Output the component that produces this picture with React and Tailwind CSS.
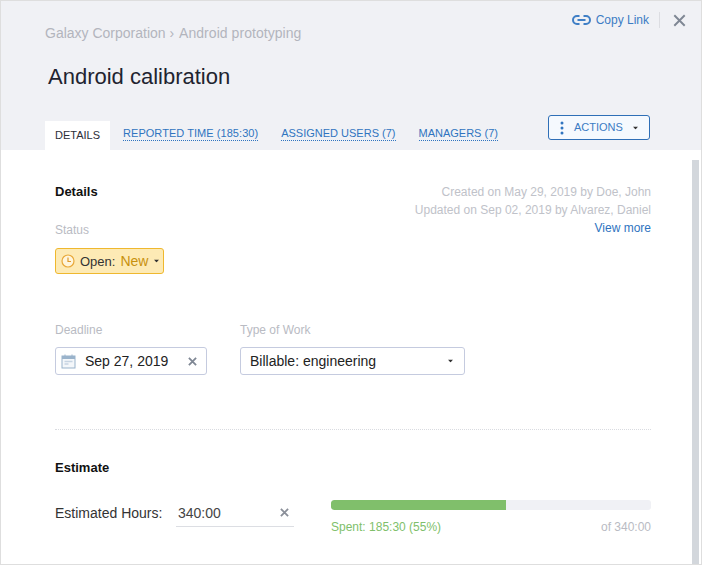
import React from "react";

const Caret = ({ className = "" }) => (
  <svg width="7" height="4" viewBox="0 0 7 4" className={className}><path d="M0 0h7L3.5 4z" fill="currentColor" /></svg>
);

const Cross = ({ size = 9, color = "#7f8794", sw = 2 }) => (
  <svg width={size} height={size} viewBox="0 0 10 10"><path d="M1 1l8 8M9 1l-8 8" stroke={color} strokeWidth={sw} fill="none" /></svg>
);

const Tab = ({ children, className = "" }) => (
  <span className={`text-[11px] leading-[13px] text-[#2f74c0] border-b border-dotted border-[#2f74c0] ${className}`}>{children}</span>
);

export default function App() {
  return (
    <div className="w-[702px] h-[565px] flex flex-col overflow-hidden bg-white border border-[#dedede] text-[#222] font-['Liberation_Sans',Arial,sans-serif]">
      <header className="h-[149px] shrink-0 bg-[#f0f1f5] flex flex-col">
        <div className="flex justify-between items-start">
          <div className="pl-[44px] pt-[24px] text-[14px] leading-[16px] text-[#b3b5bd]">Galaxy Corporation › <span className="ml-[1px] tracking-[0.05px]">Android prototyping</span></div>
          <div className="flex items-center pt-[11px] pr-[15px]">
            <svg width="19" height="10" viewBox="0 0 19 10" className="mr-[5px]">
              <path d="M7.5 1H5a4 4 0 0 0 0 8h2.500M11.500 1H14a4 4 0 0 1 0 8h-2.500M5.500 5h8" stroke="#3f7fc6" strokeWidth="2" fill="none" />
            </svg>
            <span className="text-[12px] leading-[14px] text-[#3c7cc4]">Copy Link</span>
            <span className="w-px h-[16px] bg-[#dcdde2] ml-[10px] mr-[13px]"></span>
            <Cross size={13} color="#7f8794" sw={1.500} />
          </div>
        </div>
        <h1 className="pl-[47px] mt-[23px] text-[22px] leading-[26px] font-normal text-[#1f2430]">Android calibration</h1>
        <div className="mt-auto flex items-end pl-[44px] pr-[51px]">
          <div className="w-[65px] h-[29px] bg-white flex items-center justify-center text-[11px] text-[#2b2f38]">DETAILS</div>
          <div className="flex items-center gap-[23px] ml-[13px] h-[29px] pb-[4px]">
            <Tab className="tracking-[0.05px]">REPORTED TIME (185:30)</Tab>
            <Tab>ASSIGNED USERS (7)</Tab>
            <Tab>MANAGERS (7)</Tab>
          </div>
          <button className="ml-auto mb-[10px] w-[102px] h-[25px] rounded-[3px] border border-[#2f6fb7] bg-[#f5f9fe] flex items-center pl-[11px] text-[#3c7cc4]">
            <svg width="4" height="14" viewBox="0 0 4 14" className="mr-[10px]">
              <circle cx="2" cy="2" r="1.500" fill="#2f74c0" /><circle cx="2" cy="7" r="1.500" fill="#2f74c0" /><circle cx="2" cy="12" r="1.500" fill="#2f74c0" />
            </svg>
            <span className="text-[11px] leading-[13px]">ACTIONS</span>
            <Caret className="ml-[9px] text-[#333] scale-75" />
          </button>
        </div>
      </header>

      <div className="flex-1 min-h-0 flex">
        <main className="flex-1 pl-[54px] pr-[41px] pt-[34px]">
          <div className="flex justify-between items-start">
            <div>
              <h2 className="text-[13px] leading-[15px] font-bold text-[#111]">Details</h2>
              <div className="mt-[24px] text-[12px] leading-[14px] text-[#b9bbc3]">Status</div>
              <div className="mt-[11px] w-[109px] h-[26px] rounded-[3px] border border-[#efb82e] bg-[#fdeab5] flex items-center pl-[5px]">
                <svg width="14" height="14" viewBox="0 0 14 14" className="mr-[5px]">
                  <circle cx="7" cy="7" r="6" fill="#fff5dc" stroke="#e9a93a" strokeWidth="1.200" />
                  <path d="M7 3.500V7.500H10" stroke="#e09a2a" strokeWidth="1.200" fill="none" />
                </svg>
                <span className="text-[13px] leading-[15px] text-[#333]">Open:</span>
                <span className="ml-[5px] text-[14px] leading-[16px] text-[#c8910f]">New</span>
                <Caret className="ml-[5px] text-[#333] scale-75" />
              </div>
            </div>
            <div className="-mt-[1px] text-right text-[12px] leading-[18px] text-[#c0c2c9]">
              <div>Created on May 29, 2019 by Doe, John</div>
              <div>Updated on Sep 02, 2019 by Alvarez, Daniel</div>
              <div className="text-[#2f74c0]">View more</div>
            </div>
          </div>

          <div className="mt-[49px] flex gap-[33px]">
            <div className="w-[152px]">
              <div className="text-[12px] leading-[14px] text-[#b9bbc3]">Deadline</div>
              <div className="mt-[10px] h-[28px] rounded-[3px] border border-[#c5cbdf] flex items-center pl-[5px] pr-[9px]">
                <svg width="15" height="15" viewBox="0 0 15 15" className="mr-[9px]">
                  <rect x="1" y="2" width="13" height="12" fill="#f4f7fa" stroke="#9ab3cb" />
                  <path d="M1 2h13v3H1z" fill="#9ab3cb" />
                  <path d="M4 0.500v2M11 0.500v2" stroke="#9ab3cb" />
                  <path d="M3.500 7.500h8M3.500 10h4" stroke="#c6d4e2" strokeWidth="1.500" />
                </svg>
                <span className="text-[14px] leading-[16px] text-[#222]">Sep 27, 2019</span>
                <span className="ml-auto flex"><Cross size={9} /></span>
              </div>
            </div>
            <div className="w-[225px]">
              <div className="text-[12px] leading-[14px] text-[#b9bbc3]">Type of Work</div>
              <div className="mt-[10px] h-[28px] rounded-[3px] border border-[#c5cbdf] flex items-center pl-[9px] pr-[10px]">
                <span className="text-[14px] leading-[16px] text-[#222]">Billable: engineering</span>
                <Caret className="ml-auto text-[#333] scale-75" />
              </div>
            </div>
          </div>

          <div className="mt-[54px] border-t border-dotted border-[#d9dbe0]"></div>

          <h2 className="mt-[30px] text-[13px] leading-[15px] font-bold text-[#111]">Estimate</h2>
          <div className="mt-[28px] flex items-start">
            <span className="text-[14px] leading-[20px] w-[121px] text-[#333]">Estimated Hours:</span>
            <div className="w-[118px] h-[24px] border-b border-[#dcdee3] flex items-start pl-[2px] pr-[5px]">
              <span className="text-[14px] leading-[20px] text-[#444]">340:00</span>
              <span className="ml-auto mt-[5px] flex"><Cross size={9} color="#8a8f99" /></span>
            </div>
            <div className="ml-[37px] flex-1 -mt-[3px]">
              <div className="h-[10px] rounded-[3px] bg-[#f0f1f5] overflow-hidden">
                <div className="h-full rounded-l-[3px] bg-[#80bf6b]" style={{ width: "54.700%" }}></div>
              </div>
              <div className="mt-[10px] flex justify-between text-[12px] leading-[14px]">
                <span className="text-[#80bf6b]">Spent: 185:30 (55%)</span>
                <span className="text-[#b9bbc3]">of 340:00</span>
              </div>
            </div>
          </div>
        </main>
        <div className="w-[9px] shrink-0 pt-[10px]">
          <div className="h-full w-[7px] bg-[#d3d7dc]"></div>
        </div>
      </div>
    </div>
  );
}
